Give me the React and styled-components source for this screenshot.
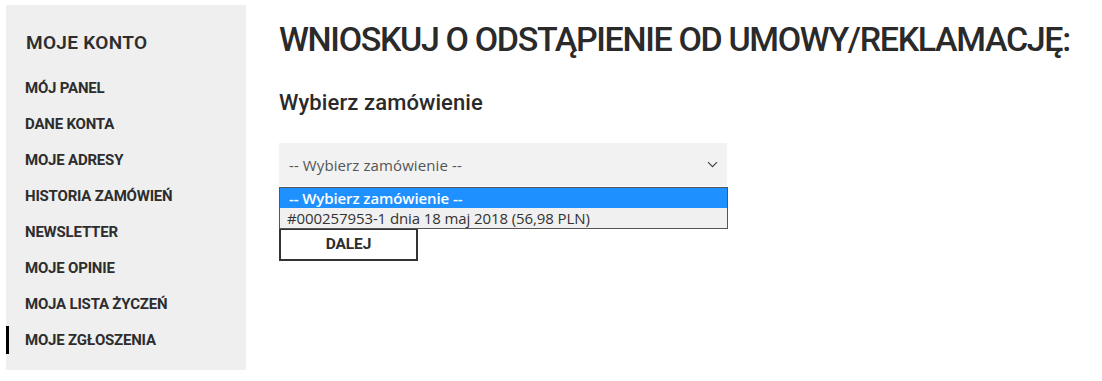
import React from "react";
import styled, { createGlobalStyle } from "styled-components";

const Global = createGlobalStyle`
  html, body { margin: 0; padding: 0; background: #fff; }
  body { font-family: "Roboto", "Liberation Sans", sans-serif; color: #2b2b2b; }
`;

const Page = styled.div`
  display: flex;
  align-items: flex-start;
  padding: 5px 0 0 6px;
  gap: 33px;
`;

const Sidebar = styled.nav`
  width: 240px;
  height: 365px;
  background: #efefef;
  box-sizing: border-box;
  padding: 28px 0 0 0;
  display: flex;
  flex-direction: column;
`;

const SideTitle = styled.h2`
  margin: 0 0 17px 20px;
  font-size: 19px;
  font-weight: 600;
  letter-spacing: 0.3px;
  color: #2d2d2d;
  line-height: 20px;
`;

const NavItem = styled.a`
  display: flex;
  align-items: center;
  height: ${(p) => (p.$active ? "28px" : "36px")};
  margin: ${(p) => (p.$active ? "4px 0" : "0")};
  padding-left: ${(p) => (p.$active ? "16px" : "19px")};
  border-left: ${(p) => (p.$active ? "3px solid #000" : "0")};
  font-size: 15px;
  font-weight: 700;
  letter-spacing: -0.2px;
  color: #2d2d2d;
  text-decoration: none;
  box-sizing: border-box;
`;

const Main = styled.main`
  display: flex;
  flex-direction: column;
  padding-top: 14px;
`;

const Heading = styled.h1`
  margin: 0;
  font-size: 34px;
  font-weight: 500;
  letter-spacing: -1.35px;
  line-height: 40px;
  color: #2a2a2a;
`;

const SubHeading = styled.h3`
  margin: 31px 0 0 0;
  font-size: 22px;
  font-weight: 500;
  line-height: 26px;
  letter-spacing: 0.1px;
  color: #2a2a2a;
`;

const SelectWrap = styled.div`
  margin-top: 27px;
  width: 448px;
  display: flex;
  flex-direction: column;
  position: relative;
`;

const SelectBox = styled.div`
  height: 43px;
  background: #f2f2f2;
  display: flex;
  align-items: center;
  justify-content: space-between;
  padding: 0 9px 0 10px;
  font-family: "Open Sans", sans-serif;
  font-size: 15px;
  color: #555;
  letter-spacing: 0.1px;
`;

const Chevron = styled.svg`
  width: 11px;
  height: 7px;
`;

const List = styled.ul`
  position: absolute;
  top: 44px;
  left: 0;
  width: 449px;
  margin: 0;
  padding: 0;
  list-style: none;
  background: #fff;
  border: 1px solid #555;
  box-sizing: border-box;
  z-index: 2;
  font-family: "Open Sans", sans-serif;
  font-size: 15px;
`;

const Option = styled.li`
  height: ${(p) => (p.$selected ? "20px" : "20px")};
  line-height: 20px;
  padding-left: ${(p) => (p.$selected ? "9px" : "7px")};
  background: ${(p) => (p.$selected ? "#1e90ff" : "#f0f0f0")};
  color: ${(p) => (p.$selected ? "#fff" : "#333")};
  font-weight: ${(p) => (p.$selected ? 600 : 400)};
  letter-spacing: -0.1px;
`;

const Button = styled.button`
  margin-top: 42px;
  width: 139px;
  height: 33px;
  background: #fff;
  border: 2px solid #333;
  font-family: "Roboto", sans-serif;
  font-weight: 700;
  font-size: 15.5px;
  color: #2d2d2d;
  letter-spacing: -0.1px;
  box-sizing: border-box;
  padding-top: 0;
`;

const items = [
  "MÓJ PANEL",
  "DANE KONTA",
  "MOJE ADRESY",
  "HISTORIA ZAMÓWIEŃ",
  "NEWSLETTER",
  "MOJE OPINIE",
  "MOJA LISTA ŻYCZEŃ",
  "MOJE ZGŁOSZENIA",
];

export default function App() {
  return (
    <>
      <Global />
      <Page>
        <Sidebar>
          <SideTitle>MOJE KONTO</SideTitle>
          {items.map((t, i) => (
            <NavItem key={t} $active={i === items.length - 1}>
              {t}
            </NavItem>
          ))}
        </Sidebar>
        <Main>
          <Heading>WNIOSKUJ O ODSTĄPIENIE OD UMOWY/REKLAMACJĘ:</Heading>
          <SubHeading>Wybierz zamówienie</SubHeading>
          <SelectWrap>
            <SelectBox>
              <span>-- Wybierz zamówienie --</span>
              <Chevron viewBox="0 0 11 7">
                <path d="M1 1.2 L5.5 5.7 L10 1.2" fill="none" stroke="#444" strokeWidth="1.2" />
              </Chevron>
            </SelectBox>
            <List>
              <Option $selected>-- Wybierz zamówienie --</Option>
              <Option>#000257953-1 dnia 18 maj 2018 (56,98 PLN)</Option>
            </List>
            <Button>DALEJ</Button>
          </SelectWrap>
        </Main>
      </Page>
    </>
  );
}
